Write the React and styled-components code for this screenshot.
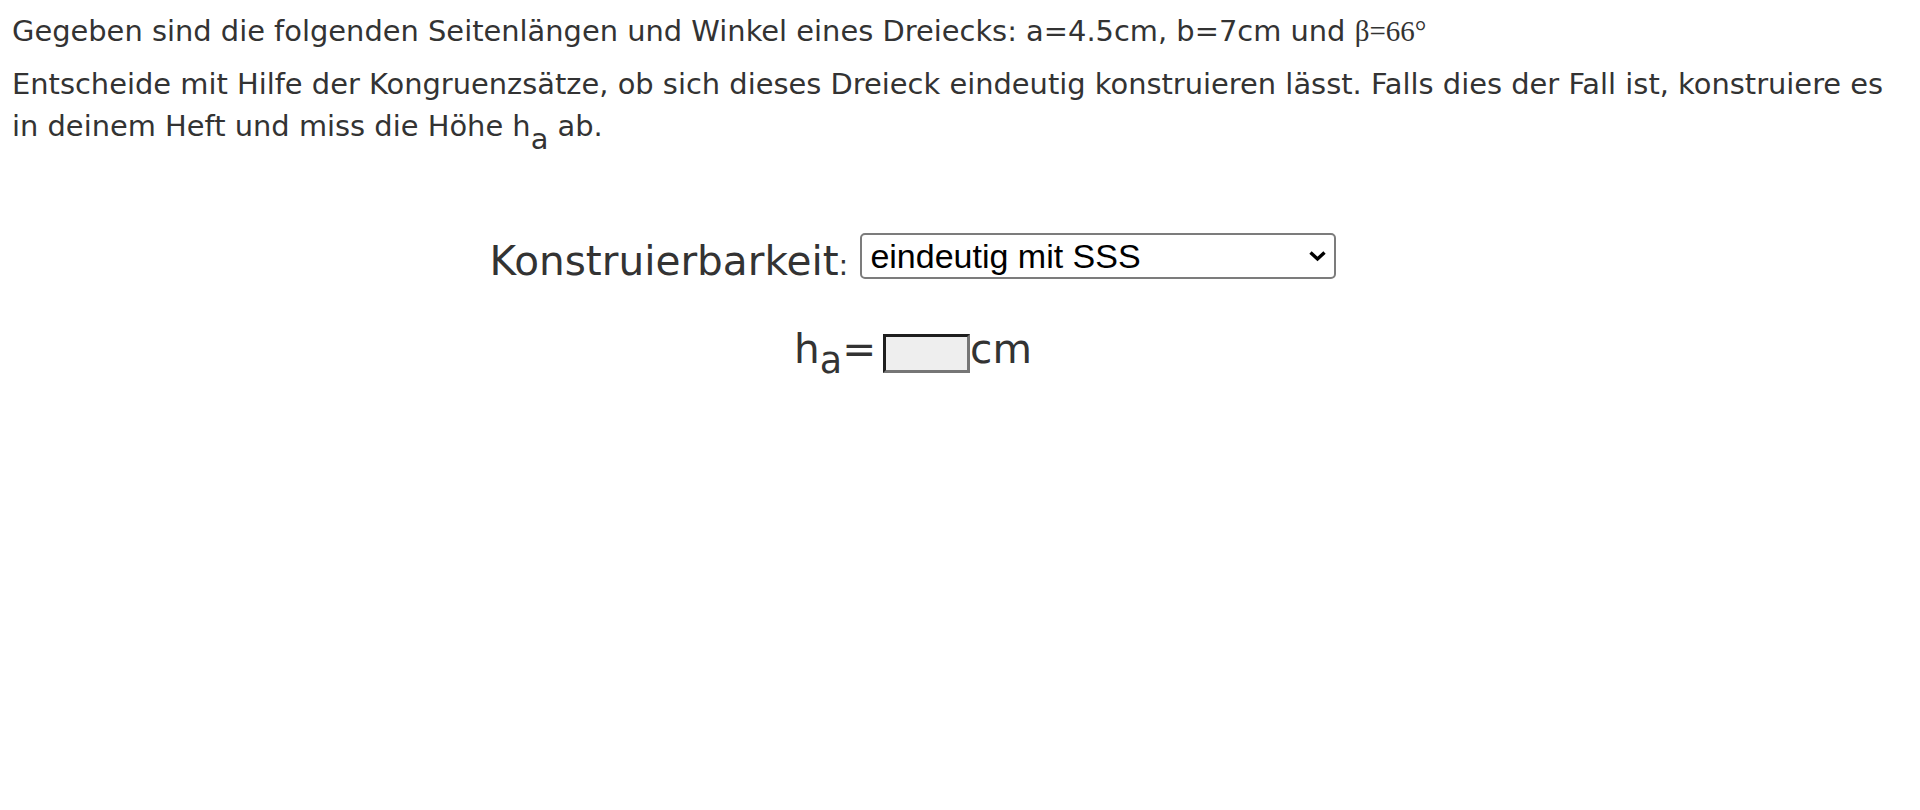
import React from "react";
import styled, { createGlobalStyle } from "styled-components";

const GlobalStyle = createGlobalStyle`
  html, body {
    margin: 0;
    padding: 0;
    background: #fff;
  }
`;

const Page = styled.div`
  padding: 12px;
  font-family: "DejaVu Sans", Verdana, sans-serif;
  font-size: 28.9px;
  color: #333;
`;

const Para = styled.p`
  margin: 0 0 ${(p) => p.$after || 0}px 0;
  line-height: ${(p) => p.$line}px;
`;

const Greek = styled.span`
  font-family: "Liberation Serif", "Times New Roman", serif;
  font-size: 29px;
`;

const Sub = styled.sub`
  font-size: ${(p) => p.$size || "1em"};
  vertical-align: ${(p) => p.$drop}px;
  line-height: 0;
`;

const Form = styled.div`
  margin-top: 86px;
  padding-right: 94px;
  display: flex;
  flex-direction: column;
  align-items: center;
  gap: 38px;
`;

const Row = styled.div`
  display: flex;
  align-items: flex-start;
`;

const BigText = styled.span`
  font-size: 40.6px;
  line-height: 46px;
  margin-top: ${(p) => p.$top || 0}px;
  white-space: pre;
`;

const Colon = styled.span`
  font-size: 29px;
`;

const SelectWrap = styled.div`
  position: relative;
  margin-left: 12px;
`;

const Select = styled.select`
  appearance: none;
  box-sizing: border-box;
  width: 476px;
  height: 46px;
  padding: 0 40px 0 8px;
  border: 2px solid #7c7c7c;
  border-radius: 5px;
  background: #fff;
  color: #000;
  font-family: "Liberation Sans", Arial, sans-serif;
  font-size: 34px;
  outline: none;
`;

const Chevron = styled.svg`
  position: absolute;
  right: 9px;
  top: 17px;
  pointer-events: none;
`;

const Field = styled.input`
  box-sizing: border-box;
  width: 87px;
  height: 39px;
  margin-top: 8px;
  margin-left: -6px;
  padding: 0 4px;
  border-style: solid;
  border-width: 3px;
  border-color: #1e1e1e #767676 #767676 #1e1e1e;
  background: #eeeeee;
  font-size: 24px;
  outline: none;
`;

export default function App() {
  return (
    <>
      <GlobalStyle />
      <Page>
        <Para $line={38} $after={14}>
          Gegeben sind die folgenden Seitenlängen und Winkel eines Dreiecks: a=4.5cm, b=7cm und{" "}
          <Greek>β=66°</Greek>
        </Para>
        <Para $line={41.6}>
          Entscheide mit Hilfe der Kongruenzsätze, ob sich dieses Dreieck eindeutig konstruieren
          lässt. Falls dies der Fall ist, konstruiere es in deinem Heft und miss die Höhe h
          <Sub $drop={-13}>a</Sub> ab.
        </Para>
        <Form>
          <Row>
            <BigText $top={5}>
              Konstruierbarkeit<Colon>:</Colon>
            </BigText>
            <SelectWrap>
              <Select defaultValue="sss">
                <option value="sss">eindeutig mit SSS</option>
                <option value="sws">eindeutig mit SWS</option>
                <option value="wsw">eindeutig mit WSW</option>
                <option value="ssw">eindeutig mit SsW</option>
                <option value="nicht">nicht eindeutig</option>
              </Select>
              <Chevron width="19" height="12" viewBox="0 0 19 12">
                <path d="M2.5 2.5 L9.5 9 L16.5 2.5" fill="none" stroke="#000" strokeWidth="3.4" />
              </Chevron>
            </SelectWrap>
          </Row>
          <Row>
            <BigText>
              h<Sub $drop={-10} $size="0.9em">a</Sub>={" "}
            </BigText>
            <Field type="text" />
            <BigText>cm</BigText>
          </Row>
        </Form>
      </Page>
    </>
  );
}
